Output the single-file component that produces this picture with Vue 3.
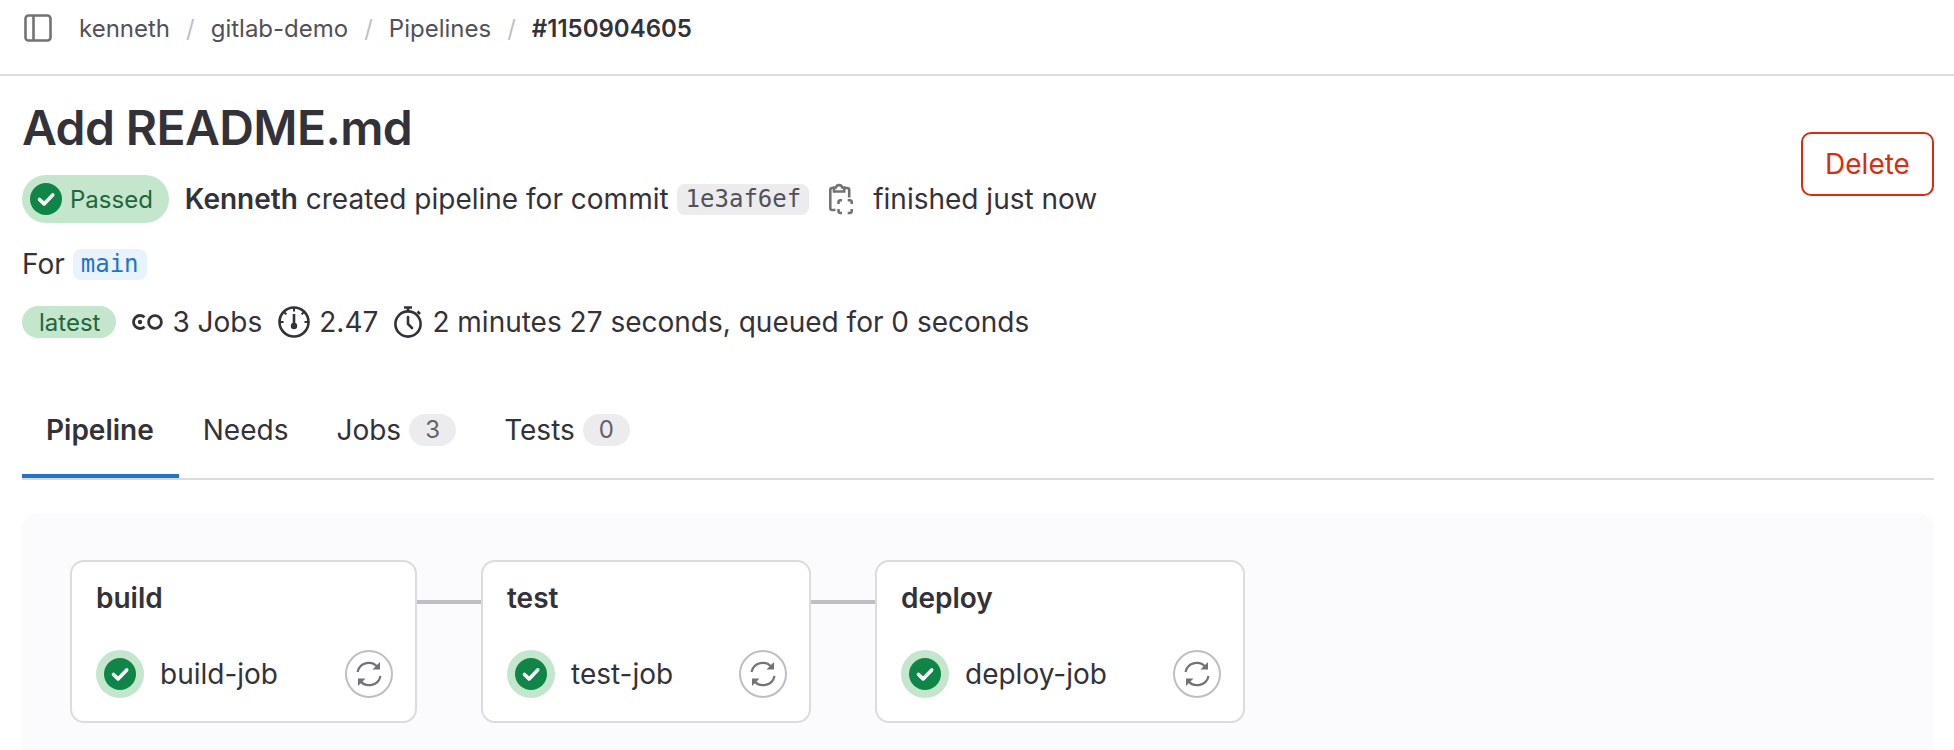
<template>
  <div class="page">
    <header class="topbar">
      <svg class="sidebar-icon" viewBox="0 0 28 28" width="28" height="28">
        <rect x="1.5" y="1.5" width="25" height="25" rx="3" fill="none" stroke="#737278" stroke-width="2.6" />
        <path d="M9.5 2v24" stroke="#737278" stroke-width="2.6" />
      </svg>
      <nav class="crumbs">
        <template v-for="(c, i) in crumbs" :key="c">
          <span v-if="i > 0" class="sep">/</span>
          <span :class="{ current: i === crumbs.length - 1 }">{{ c }}</span>
        </template>
      </nav>
    </header>

    <main class="content">
      <section class="head">
        <div class="info">
          <h1>Add README.md</h1>
          <div class="row row-status">
            <span class="badge-passed">
              <svg class="check" viewBox="0 0 32 32" width="32" height="32">
                <circle cx="16" cy="16" r="16" fill="#108548" />
                <path d="M9.5 16.5l4.6 4.4 8.6-9" fill="none" stroke="#fff" stroke-width="3.6" stroke-linecap="round" stroke-linejoin="round" />
              </svg>
              Passed
            </span>
            <span class="summary"><b>Kenneth</b> created pipeline for commit</span>
            <code class="sha">1e3af6ef</code>
            <svg class="clip" viewBox="0 0 24 32" width="24" height="32" fill="none" stroke="#737278" stroke-width="2.6">
              <path d="M5 5H3.300a2 2 0 0 0-2 2v18a2 2 0 0 0 2 2H6.500" />
              <path d="M15 5h3.200a2 2 0 0 1 2 2v7.500" />
              <path d="M5 8.500V4.500h2a3.200 3.200 0 0 1 6.200 0h2v4z" />
              <path d="M9.500 21v-1.700a2 2 0 0 1 2-2H13M18.700 17.300h2a2 2 0 0 1 2 2V21M22.700 26v2a2 2 0 0 1-2 2h-2M13 30h-1.500a2 2 0 0 1-2-2v-2" />
            </svg>
            <span>finished just now</span>
          </div>
          <div class="row row-ref">
            <span>For</span>
            <code class="ref">main</code>
          </div>
          <div class="row row-meta">
            <span class="badge-latest">latest</span>
            <svg class="pipe" viewBox="0 0 31 16" width="31" height="16" fill="none" stroke="#333238" stroke-width="2.8">
              <path d="M12.500 3.300A6.500 6.500 0 1 0 12.500 12.700" />
              <circle cx="8" cy="8" r="2.200" fill="#333238" stroke="none" />
              <circle cx="23" cy="8" r="6.400" />
            </svg>
            <span>3 Jobs</span>
            <svg class="gauge" viewBox="0 0 32 32" width="32" height="32" fill="none" stroke="#333238" stroke-width="2.6">
              <circle cx="16" cy="16" r="14.500" />
              <path d="M16 2v3.500M6 6l2.400 2.400M26 6l-2.400 2.400M2 16h3.500M30 16h-3.500" stroke-width="2" />
              <path d="M16 8v10" stroke-width="2.600" />
              <circle cx="16" cy="20" r="3.200" fill="#333238" stroke="none" />
            </svg>
            <span>2.47</span>
            <svg class="timer" viewBox="0 0 30 32" width="30" height="32" fill="none" stroke="#333238" stroke-width="2.6">
              <circle cx="15" cy="18" r="12.600" />
              <path d="M11 1.500h8M15 2v4M24.500 5.500l2.500 2.500" />
              <path d="M15 11v7l4 4" stroke-linecap="round" />
            </svg>
            <span>2 minutes 27 seconds, queued for 0 seconds</span>
          </div>
        </div>
        <button class="delete">Delete</button>
      </section>

      <div class="tabs">
        <div v-for="t in tabs" :key="t.name" class="tab" :class="{ active: t.active }">
          {{ t.name }}
          <span v-if="t.count !== undefined" class="count">{{ t.count }}</span>
        </div>
      </div>

      <section class="graph">
        <template v-for="(s, i) in stages" :key="s.name">
          <div v-if="i > 0" class="link"></div>
          <div class="stage" :style="{ width: s.width + 'px' }">
            <div class="stage-name">{{ s.name }}</div>
            <div class="job">
              <span class="job-status">
                <svg viewBox="0 0 32 32" width="32" height="32">
                  <circle cx="16" cy="16" r="16" fill="#108548" />
                  <path d="M9.5 16.5l4.6 4.4 8.6-9" fill="none" stroke="#fff" stroke-width="3.6" stroke-linecap="round" stroke-linejoin="round" />
                </svg>
              </span>
              <span class="job-name">{{ s.job }}</span>
              <span class="retry">
                <svg viewBox="0 0 26 26" width="26" height="26" fill="none" stroke="#737278" stroke-width="2.2">
                  <path d="M1.500 11A11.500 11.500 0 0 1 22 6.500" />
                  <path d="M24.500 15A11.500 11.500 0 0 1 4 19.500" />
                  <path d="M24 1v7.500h-7.500z" fill="#737278" stroke="none" />
                  <path d="M2 25v-7.500h7.500z" fill="#737278" stroke="none" />
                </svg>
              </span>
            </div>
          </div>
        </template>
      </section>
    </main>
  </div>
</template>

<script setup>
const crumbs = ['kenneth', 'gitlab-demo', 'Pipelines', '#1150904605']

const tabs = [
  { name: 'Pipeline', active: true },
  { name: 'Needs' },
  { name: 'Jobs', count: 3 },
  { name: 'Tests', count: 0 },
]

const stages = [
  { name: 'build', job: 'build-job', width: 347 },
  { name: 'test', job: 'test-job', width: 330 },
  { name: 'deploy', job: 'deploy-job', width: 370 },
]
</script>

<style>
html,
body {
  overflow: hidden;
  background: #fff;
}
</style>

<style scoped>
.page {
  height: 750px;
  overflow: hidden;
  font-family: Inter, "Noto Sans", sans-serif;
  font-size: 28px;
  color: #333238;
}

.topbar {
  box-sizing: border-box;
  height: 76px;
  display: flex;
  align-items: flex-start;
  padding: 14px 0 0 24px;
  border-bottom: 2px solid #dcdcde;
}

.crumbs {
  display: flex;
  align-items: center;
  height: 28px;
  margin-left: 27px;
  font-size: 24px;
  color: #535158;
}

.sep {
  margin: 0 16px;
  color: #bfbfc3;
}

.current {
  font-weight: 600;
  color: #333238;
}

.content {
  padding: 0 20px 0 22px;
}

.head {
  display: flex;
  justify-content: space-between;
  align-items: flex-start;
}

h1 {
  margin: 0;
  padding-top: 24px;
  height: 99px;
  box-sizing: border-box;
  font-size: 48px;
  line-height: 56px;
  font-weight: 600;
  letter-spacing: -0.6px;
}

.row {
  display: flex;
  align-items: center;
}

.row-status {
  height: 48px;
  gap: 16px;
}

.badge-passed {
  display: flex;
  align-items: center;
  gap: 8px;
  height: 48px;
  padding: 0 16px 0 8px;
  border-radius: 24px;
  background: #c3e6cd;
  color: #24663b;
  font-size: 24px;
}

.summary b {
  font-weight: 600;
}

code {
  font-family: "DejaVu Sans Mono", "Liberation Mono", monospace;
  font-size: 24px;
  height: 31px;
  line-height: 31px;
  border-radius: 8px;
}

.sha {
  padding: 0 8px 0 9px;
  margin-left: -8px;
  background: #ececef;
  color: #535158;
}

.clip {
  margin: 0 4px;
}

.row-ref {
  height: 32px;
  margin-top: 25px;
  gap: 8px;
}

.ref {
  padding: 0 8px;
  background: #e9f3fc;
  color: #1f75cb;
}

.row-meta {
  height: 32px;
  margin-top: 26px;
  gap: 8px;
}

.badge-latest {
  display: flex;
  align-items: center;
  height: 32px;
  padding: 0 16px 0 17px;
  margin-right: 8px;
  border-radius: 16px;
  background: #c3e6cd;
  color: #24663b;
  font-size: 24px;
}

.pipe {
  margin-right: 1px;
}

.gauge {
  margin: 0 1px 0 8px;
}

.timer {
  margin: 0 1px 0 7px;
}

.delete {
  margin-top: 56px;
  width: 133px;
  height: 64px;
  border: 2px solid #dd2b0e;
  border-radius: 10px;
  background: #fff;
  color: #dd2b0e;
  font-family: inherit;
  font-size: 28px;
}

.tabs {
  display: flex;
  margin-top: 61px;
  height: 79px;
  border-bottom: 2px solid #dcdcde;
}

.tab {
  display: flex;
  align-items: flex-start;
  gap: 8px;
  height: 79px;
  box-sizing: border-box;
  padding: 15px 24px 0;
  line-height: 32px;
}

.tab.active {
  padding-right: 25px;
  font-weight: 600;
  border-bottom: 4px solid #1f75cb;
}

.count {
  display: inline-block;
  height: 32px;
  min-width: 47px;
  text-align: center;
  border-radius: 16px;
  background: #ececef;
  color: #626168;
  font-size: 24px;
  font-weight: 400;
}

.graph {
  display: flex;
  align-items: flex-start;
  margin-top: 33px;
  height: 300px;
  padding: 47px 48px 0;
  border-radius: 16px;
  background: #fbfafd;
}

.stage {
  box-sizing: border-box;
  height: 163px;
  padding: 20px 22px 0 24px;
  border: 2px solid #dcdcde;
  border-radius: 14px;
  background: #fff;
}

.stage-name {
  height: 68px;
  line-height: 32px;
  font-size: 28px;
  font-weight: 600;
}

.link {
  flex: none;
  width: 64px;
  height: 4px;
  margin-top: 40px;
  background: #bfbfc3;
}

.job {
  display: flex;
  align-items: center;
}

.job-status {
  display: flex;
  align-items: center;
  justify-content: center;
  width: 48px;
  height: 48px;
  border-radius: 50%;
  background: #c3e6cd;
}

.job-name {
  flex: 1;
  margin-left: 16px;
}

.retry {
  display: flex;
  align-items: center;
  justify-content: center;
  box-sizing: border-box;
  width: 48px;
  height: 48px;
  border: 2px solid #bfbfc3;
  border-radius: 50%;
}
</style>
